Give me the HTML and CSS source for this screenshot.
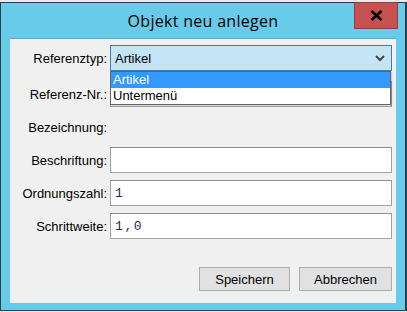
FILE: index.html
```html
<!DOCTYPE html>
<html lang="de">
<head>
    <meta charset="UTF-8">
    <title>Objekt neu anlegen</title>
    <link rel="stylesheet" href="styles.css">
</head>
<body>
    <div class="window">
        <!-- Titelleiste -->
        <div class="titlebar">
            <span class="title">Objekt neu anlegen</span>
            <button class="close" type="button">
                <svg width="13" height="11" viewBox="0 0 13 11">
                    <path d="M1.5 1 L11.5 10 M11.5 1 L1.5 10" stroke="#000" stroke-width="2.6" fill="none"/>
                </svg>
            </button>
        </div>

        <!-- Inhalt -->
        <div class="content">
            <form class="form">
                <div class="row row-first">
                    <label class="label">Referenztyp:</label>
                    <div class="select">
                        <span>Artikel</span>
                        <svg class="chevron" width="10" height="7" viewBox="0 0 10 7">
                            <path d="M1 1 L5 5 L9 1" stroke="#444" stroke-width="2" fill="none"/>
                        </svg>
                        <ul class="dropdown">
                            <li class="active">Artikel</li>
                            <li>Untermenü</li>
                        </ul>
                    </div>
                </div>
                <div class="row">
                    <label class="label">Referenz-Nr.:</label>
                    <input class="field" type="text">
                </div>
                <div class="row">
                    <label class="label">Bezeichnung:</label>
                </div>
                <div class="row">
                    <label class="label">Beschriftung:</label>
                    <input class="field" type="text">
                </div>
                <div class="row">
                    <label class="label">Ordnungszahl:</label>
                    <input class="field mono" type="text" value="1">
                </div>
                <div class="row">
                    <label class="label">Schrittweite:</label>
                    <input class="field mono" type="text" value="1,0">
                </div>
            </form>

            <div class="buttons">
                <button class="btn btn-save" type="button">Speichern</button>
                <button class="btn btn-cancel" type="button">Abbrechen</button>
            </div>
        </div>
    </div>
</body>
</html>
```

FILE: styles.css
```css
/* Allgemein */
body {
    margin: 0;
    background: #e9e9e9;
    font-family: 'Liberation Sans', Arial, sans-serif;
    font-size: 13px;
    color: #000;
}

/* Fenster */
.window {
    position: relative;
    margin-top: 2px;
    width: 407px;
    height: 309px;
    box-sizing: border-box;
    border: 1px solid #2f3d44;
    border-right-width: 2px;
    background: #67cbe9;
    padding: 0 9px 0 9px;
}

.titlebar {
    height: 35px;
    display: flex;
    align-items: center;
    justify-content: center;
}

.title {
    font-family: 'Open Sans', sans-serif;
    font-size: 16px;
    letter-spacing: 0.3px;
    color: #000;
    margin-top: 1px;
}

.close {
    position: absolute;
    top: -1px;
    right: 7px;
    width: 44px;
    height: 27px;
    padding: 0;
    border: 1px solid #8f3f3f;
    background: #c75050;
    display: flex;
    align-items: center;
    justify-content: center;
}

.content {
    height: 265px;
    background: #f0f0f0;
    border-top: 1px solid #5ea9c8;
    box-sizing: border-box;
    padding-top: 6px;
}

/* Formular */
.form {
    display: flex;
    flex-direction: column;
    gap: 7px;
    margin: 0;
}

.row {
    display: flex;
    align-items: center;
    height: 26px;
}

.row-first {
    margin-bottom: 3px;
}

.label {
    width: 97px;
    text-align: right;
    white-space: nowrap;
}

.field {
    margin: 0 0 0 3px;
    width: 282px;
    height: 26px;
    box-sizing: border-box;
    border: 1px solid #a2a2a2;
    border-top-color: #8c8c8c;
    background: #fff;
    padding: 0 4px;
    font-family: 'Liberation Sans', Arial, sans-serif;
    font-size: 13px;
    outline: none;
}

.mono {
    font-family: 'Liberation Mono', monospace;
    font-size: 13px;
    letter-spacing: 1.6px;
    color: #2d1f63;
}

/* Auswahlliste */
.select {
    position: relative;
    margin-left: 3px;
    width: 282px;
    height: 26px;
    box-sizing: border-box;
    border: 1px solid #3c7fb1;
    background: #c5e5f6;
    display: flex;
    align-items: center;
    padding-left: 4px;
}

.chevron {
    position: absolute;
    right: 6px;
    top: 9px;
}

.dropdown {
    position: absolute;
    top: 25px;
    left: -1px;
    width: 281px;
    box-sizing: border-box;
    margin: 0;
    padding: 0;
    list-style: none;
    background: #fff;
    border: 1px solid #646464;
    box-shadow: 1px 1px 1px rgba(0, 0, 0, 0.15);
}

.dropdown li {
    height: 16px;
    line-height: 16px;
    padding-left: 2px;
}

.dropdown li.active {
    background: #3399ff;
    color: #fff;
}

/* Buttons */
.buttons {
    display: flex;
    justify-content: flex-end;
    gap: 9px;
    margin-top: 28px;
    padding-right: 4px;
}

.btn {
    height: 24px;
    border: 1px solid #adadad;
    background: #e1e1e1;
    font-family: 'Liberation Sans', Arial, sans-serif;
    font-size: 13px;
    color: #000;
    padding: 0;
}

.btn-save {
    width: 91px;
}

.btn-cancel {
    width: 93px;
}
```
